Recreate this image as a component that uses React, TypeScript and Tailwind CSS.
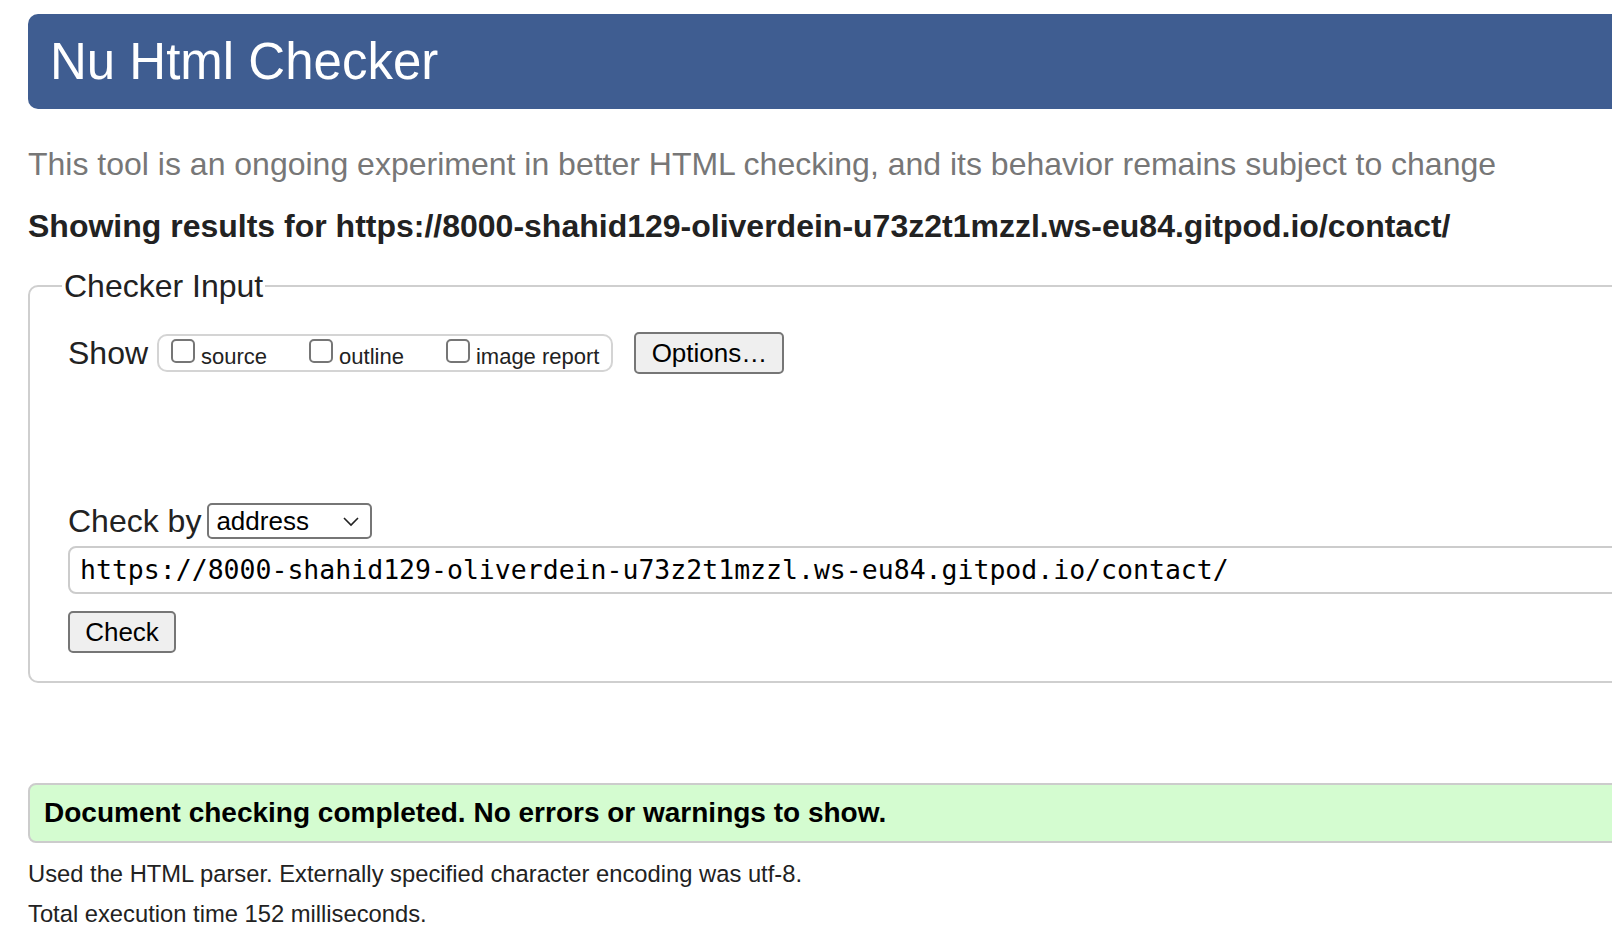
import React from "react";

function Box({ label }: { label: string }) {
  return (
    <label className="flex items-center">
      <span className="inline-block w-[24px] h-[24px] rounded-[5px] border-2 border-[#767676] bg-white mr-[6px] -mt-[4px]" />
      <span className="text-[22px] leading-none pt-[8px]">{label}</span>
    </label>
  );
}

export default function App() {
  return (
    <div
      className="w-[1612px] h-[940px] overflow-hidden bg-white text-[#222]"
      style={{ fontFamily: '"Liberation Sans", Arial, Helvetica, sans-serif' }}
    >
      <div className="w-[1760px] pl-[28px] pt-[14px]">
        <header className="h-[95px] rounded-l-[10px] bg-[#3f5d91] flex items-center pl-[22px]">
          <h1 className="text-white text-[51px] leading-none font-normal">Nu Html Checker</h1>
        </header>

        <p className="mt-[37px] text-[#777] text-[32px] leading-[36px]">
          This tool is an ongoing experiment in better HTML checking, and its behavior remains subject to change
        </p>

        <p className="mt-[26px] font-bold text-[32px] leading-[36px] text-[#222]">
          Showing results for https://8000-shahid129-oliverdein-u73z2t1mzzl.ws-eu84.gitpod.io/contact/
        </p>

        <fieldset className="mt-[24px] border-2 border-[#cfcfcf] rounded-[10px] p-0">
          <legend className="ml-[32px] px-[2px] text-[32px] leading-[36px]">Checker Input</legend>

          <div className="pl-[38px] pb-[28px]">
            <div className="flex items-center mt-[28px]">
              <span className="text-[32px] leading-none">Show</span>
              <div className="ml-[9px] h-[38px] border-2 border-[#d4d4d4] rounded-[10px] flex items-center pl-[12px] pr-[12px] gap-[42px]">
                <Box label="source" />
                <Box label="outline" />
                <Box label="image report" />
              </div>
              <button className="ml-[21px] h-[42px] w-[150px] bg-[#efefef] border-2 border-[#767676] rounded-[5px] text-[26px] leading-none text-black">
                Options…
              </button>
            </div>

            <div className="flex items-center mt-[129px]">
              <span className="text-[32px] leading-none">Check by</span>
              <div className="ml-[6px] h-[36px] w-[165px] border-2 border-[#767676] rounded-[5px] flex items-center pl-[7px] pr-[10px] justify-between bg-white">
                <span className="text-[26px] leading-none text-black">address</span>
                <svg width="18" height="12" viewBox="0 0 18 12" fill="none" stroke="#222" strokeWidth="1.6">
                  <path d="M2 3 L9 10 L16 3" />
                </svg>
              </div>
            </div>

            <div className="mt-[7px] h-[48px] border-2 border-[#cccccc] rounded-[8px] flex items-center pl-[10px]">
              <span
                className="text-[26.5px] leading-none text-black"
                style={{ fontFamily: '"DejaVu Sans Mono", monospace' }}
              >
                https://8000-shahid129-oliverdein-u73z2t1mzzl.ws-eu84.gitpod.io/contact/
              </span>
            </div>

            <button className="mt-[17px] h-[42px] w-[108px] bg-[#efefef] border-2 border-[#767676] rounded-[5px] text-[26px] leading-none text-black">
              Check
            </button>
          </div>
        </fieldset>

        <div className="mt-[100px] h-[60px] bg-[#d4fcd0] border-2 border-[#cccccc] rounded-[8px] flex items-center pl-[14px]">
          <span className="font-bold text-[28px] leading-none text-black">
            Document checking completed. No errors or warnings to show.
          </span>
        </div>

        <p className="mt-[17px] text-[23.75px] leading-[28px] text-[#222]">
          Used the HTML parser. Externally specified character encoding was utf-8.
        </p>
        <p className="mt-[12px] text-[23.75px] leading-[28px] text-[#222]">
          Total execution time 152 milliseconds.
        </p>
      </div>
    </div>
  );
}
